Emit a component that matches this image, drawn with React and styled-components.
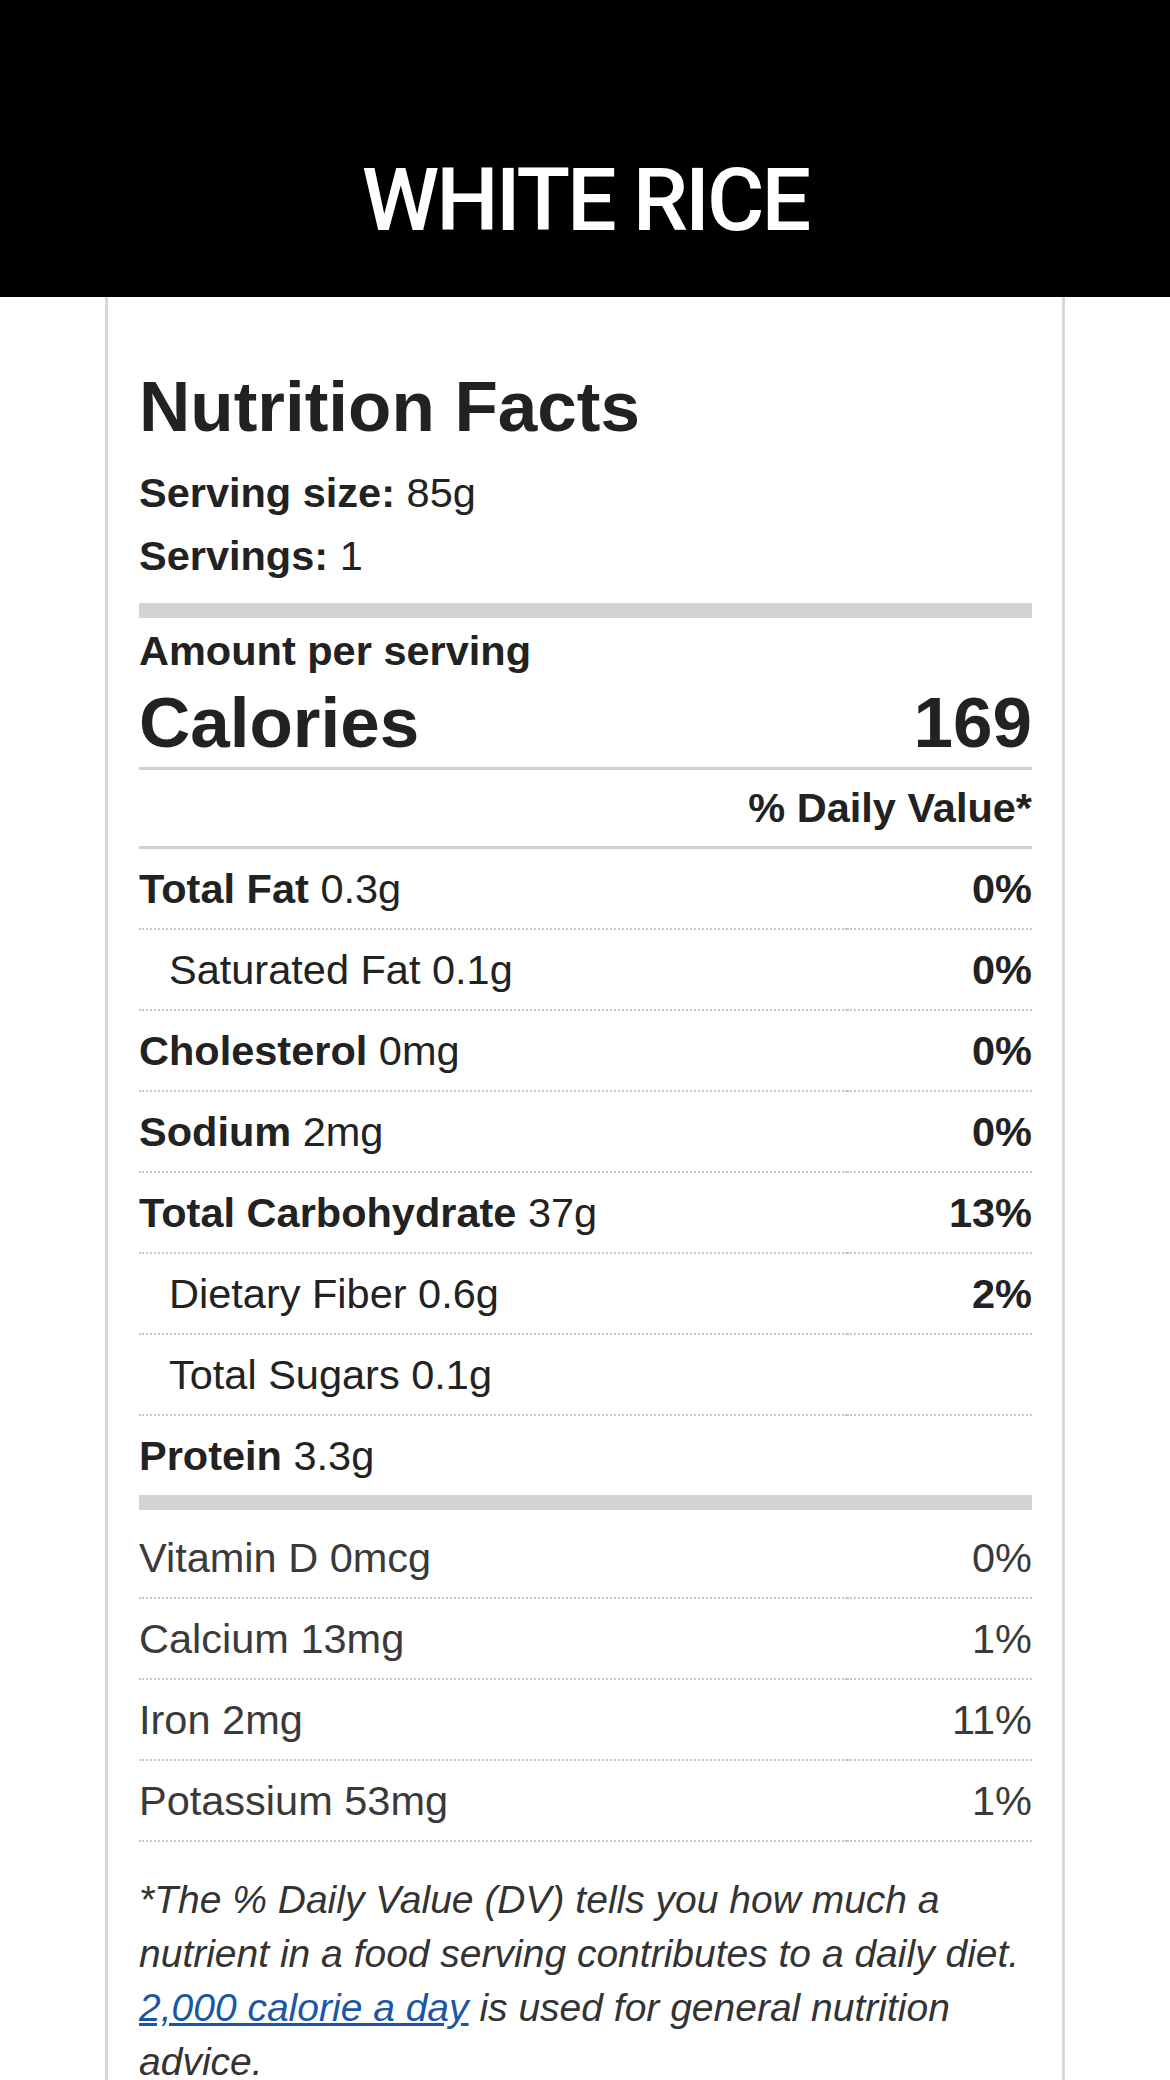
import React from 'react'
import styled, { createGlobalStyle } from 'styled-components'

const GlobalStyle = createGlobalStyle`
  body {
    margin: 0;
    background: #fff;
    font-family: "Liberation Sans", Arial, sans-serif;
    color: #222;
  }
`;

const nutrients = [
  { name: 'Total Fat', amount: '0.3g', dv: '0%' },
  { name: 'Saturated Fat', amount: '0.1g', dv: '0%', sub: true },
  { name: 'Cholesterol', amount: '0mg', dv: '0%' },
  { name: 'Sodium', amount: '2mg', dv: '0%' },
  { name: 'Total Carbohydrate', amount: '37g', dv: '13%' },
  { name: 'Dietary Fiber', amount: '0.6g', dv: '2%', sub: true },
  { name: 'Total Sugars', amount: '0.1g', dv: '', sub: true },
  { name: 'Protein', amount: '3.3g', dv: '', last: true },
];

const vitamins = [
  { name: 'Vitamin D', amount: '0mcg', dv: '0%' },
  { name: 'Calcium', amount: '13mg', dv: '1%' },
  { name: 'Iron', amount: '2mg', dv: '11%' },
  { name: 'Potassium', amount: '53mg', dv: '1%' },
];

function App() {
  return (
    <Page>
      <GlobalStyle />
      <Header>
        <Title>WHITE RICE</Title>
      </Header>
      <Card>
        <FactsTitle>Nutrition Facts</FactsTitle>
        <Meta><b>Serving size:</b> 85g</Meta>
        <Meta><b>Servings:</b> 1</Meta>
        <ThickBar $gap={16} />
        <Amount>Amount per serving</Amount>
        <CaloriesRow>
          <span>Calories</span>
          <span>169</span>
        </CaloriesRow>
        <DailyHead>% Daily Value*</DailyHead>
        {nutrients.map((n) => (
          <Row key={n.name} $last={n.last}>
            <NameCell $sub={n.sub}>
              {n.sub ? n.name : <b>{n.name}</b>} {n.amount}
            </NameCell>
            <ValueCell><b>{n.dv}</b></ValueCell>
          </Row>
        ))}
        <ThickBar $gap={0} />
        <Vitamins>
          {vitamins.map((v) => (
            <Row key={v.name} $light>
              <NameCell>{v.name} {v.amount}</NameCell>
              <ValueCell>{v.dv}</ValueCell>
            </Row>
          ))}
        </Vitamins>
        <Footnote>
          *The % Daily Value (DV) tells you how much a nutrient in a food serving
          contributes to a daily diet. <a href="#">2,000 calorie a day</a> is used
          for general nutrition advice.
        </Footnote>
      </Card>
    </Page>
  )
}

const Page = styled.div`
  width: 1170px;
  min-height: 2080px;
`;

const Header = styled.header`
  height: 297px;
  background: #000;
  display: flex;
  justify-content: center;
  box-sizing: border-box;
  padding-top: 156px;
`;

const Title = styled.h1`
  margin: 0;
  font-family: Roboto, "Liberation Sans", sans-serif;
  font-weight: 500;
  font-size: 88px;
  line-height: 88px;
  letter-spacing: -3px;
  color: #fff;
`;

const Card = styled.main`
  width: 960px;
  margin: 0 auto;
  box-sizing: border-box;
  border: 3px solid #d8d8d8;
  border-top: none;
  padding: 70px 30px 40px 31px;
`;

const FactsTitle = styled.h2`
  margin: 0;
  font-size: 71px;
  line-height: 80px;
  font-weight: 700;
`;

const Meta = styled.div`
  font-size: 41.5px;
  line-height: 63px;
  &:first-of-type {
    margin-top: 14px;
  }
`;

const ThickBar = styled.div`
  height: 15px;
  background: #d3d3d3;
  margin-top: ${(p) => p.$gap}px;
`;

const Amount = styled.div`
  margin-top: 5px;
  font-size: 41.5px;
  line-height: 56px;
  font-weight: 700;
`;

const CaloriesRow = styled.div`
  display: flex;
  justify-content: space-between;
  font-size: 71px;
  line-height: 88px;
  font-weight: 700;
  border-bottom: 3px solid #d0d0d0;
`;

const DailyHead = styled.div`
  text-align: right;
  font-size: 41.5px;
  line-height: 76px;
  font-weight: 700;
  border-bottom: 3px solid #d0d0d0;
`;

const Row = styled.div`
  display: grid;
  grid-template-columns: 1fr 185px;
  font-size: 41.5px;
  line-height: 79px;
  color: ${(p) => (p.$light ? '#3a3a3a' : '#222')};

  & > div {
    border-bottom: ${(p) => (p.$last ? 'none' : '2px dotted #c6c6c6')};
  }
`;

const NameCell = styled.div`
  padding-left: ${(p) => (p.$sub ? '30px' : '0')};
  white-space: nowrap;
`;

const ValueCell = styled.div`
  text-align: right;
`;

const Vitamins = styled.div`
  margin-top: 8px;
`;

const Footnote = styled.p`
  margin: 31px 0 0;
  font-size: 39px;
  line-height: 54px;
  font-style: italic;
  color: #333;

  a {
    color: #1b56a6;
    text-decoration: underline;
  }
`;

export default App
